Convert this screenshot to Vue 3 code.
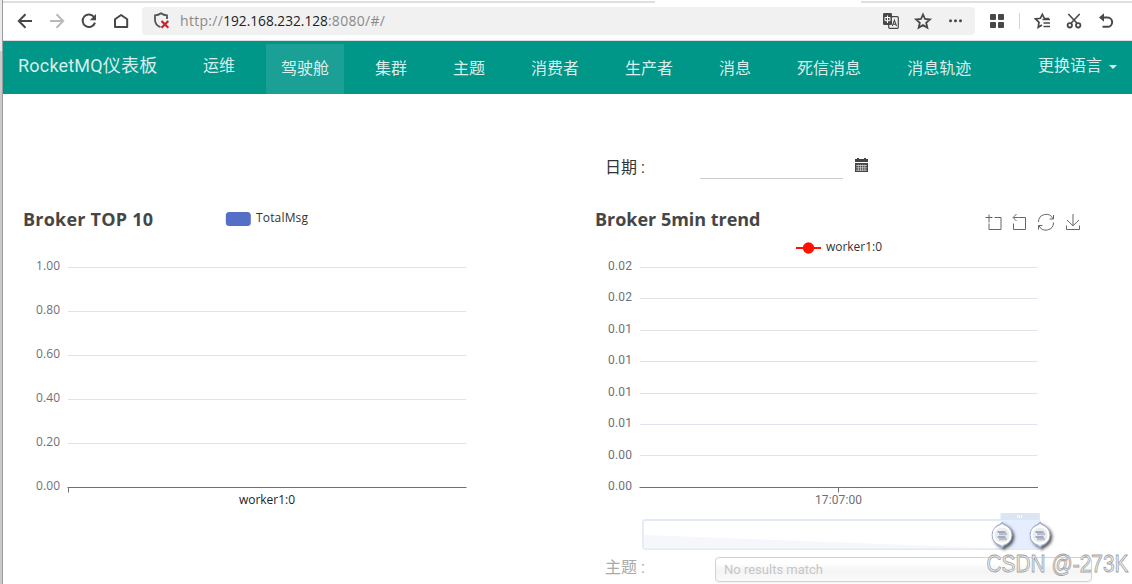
<template>
  <div class="window">
    <div class="window__edge"></div>
    <div class="browser">
      <div class="tabs">
        <span class="tabs__line tabs__line--left"></span>
        <span class="tabs__line tabs__line--right"></span>
      </div>

      <header class="toolbar">
        <svg class="toolbar__nav" width="139" height="34" viewBox="3 4 139 34" fill="none" stroke="#484848" stroke-width="2">
          <path d="M32 21H19.5M25.5 14.2L18.8 21l6.7 6.8" />
          <path stroke="#b9b9b9" d="M50 21h12.5M56.5 14.2l6.7 6.8-6.7 6.8" />
          <path d="M94.2 17.2A6.3 6.3 0 1 0 95 22.6" />
          <path fill="#484848" stroke="none" d="M96 14v6.2h-6.2z" />
          <path d="M115 19.2v7.9h12.2v-7.9L121.1 15z" stroke-linejoin="round" />
        </svg>

        <div class="address">
          <svg class="address__shield" width="18" height="18" viewBox="0 0 18 18" fill="none">
            <path d="M7.5 15.3C3.8 13.5 2 11.5 2 8V3.3c2.3 0 4.2-.6 6-2 1.8 1.4 3.7 2 6 2V7" stroke="#555" stroke-width="1.8" />
            <path d="M8.5 9l6.8 6.8M15.3 9l-6.8 6.8" stroke="#cf2027" stroke-width="2.2" />
          </svg>
          <p class="address__url"><span>http://</span><b>192.168.232.128</b><span>:8080/#/</span></p>
          <svg class="address__icons" width="84" height="20" viewBox="881 11 84 20" fill="none" stroke="#484848">
            <rect x="888.7" y="16.7" width="9.6" height="11.6" rx="1" fill="#f1f1f1" stroke-width="1.2" />
            <rect x="883" y="13" width="9" height="12" rx="1.3" fill="#484848" stroke="none" />
            <path d="M885 17.5h5v3.2h-5zM887.5 15.5v7.5" stroke="#fff" stroke-width="1" />
            <path d="M892.3 26l2.1-5.6 2.1 5.6M893 24.2h2.8" stroke-width="1.1" />
            <path d="M923 14.5l2 4.500 4.900.5-3.700 3.300 1.100 4.800-4.300-2.500-4.300 2.500 1.100-4.800-3.700-3.300 4.900-.5z" stroke-width="1.8" />
            <g fill="#484848" stroke="none">
              <circle cx="950.5" cy="20.8" r="1.5" />
              <circle cx="955.5" cy="20.8" r="1.5" />
              <circle cx="960.5" cy="20.8" r="1.5" />
            </g>
          </svg>
        </div>

        <svg class="toolbar__tools" width="142" height="26" viewBox="982 8 142 26" fill="none" stroke="#484848" stroke-width="1.8">
          <g fill="#484848" stroke="none">
            <rect x="990" y="14" width="6" height="6" rx="1" />
            <rect x="998" y="14" width="6" height="6" rx="1" />
            <rect x="990" y="22" width="6" height="6" rx="1" />
            <rect x="998" y="22" width="6" height="6" rx="1" />
          </g>
          <path stroke="#d4d4d4" stroke-width="1" d="M1019.5 13v16" />
          <path d="M1049 18.6l-4.700-.3-2-4-2 4-4.800.6 3.500 3.400-.8 5 3.800-2.300" stroke-width="1.7" />
          <path d="M1042.5 19.5h7.5M1043.5 23h6.5M1043.5 26.5h6.5" stroke-width="1.7" />
          <path d="M1068.3 14l9.2 9.7M1079.7 14l-9.2 9.7" stroke-width="1.6" />
          <circle cx="1069.8" cy="25.3" r="2.2" />
          <circle cx="1078.2" cy="25.3" r="2.2" />
          <path d="M1101.5 17.5h6a4.6 4.6 0 0 1 0 9.3h-5" stroke-width="2" />
          <path fill="#484848" stroke="none" d="M1099 17.5l5-4.3v8.6z" />
        </svg>
      </header>

      <nav class="navbar">
        <a class="navbar__brand">RocketMQ仪表板</a>
        <a class="navbar__item navbar__item--ops">运维</a>
        <a
          v-for="item in menu"
          :key="item"
          class="navbar__item"
          :class="{ 'navbar__item--active': item === active }"
          @click="active = item"
        >{{ item }}</a>
        <a class="navbar__lang">更换语言<i class="caret"></i></a>
      </nav>

      <main class="dashboard">
        <section class="panel panel--top">
          <svg class="chart" width="480" height="320">
            <text class="chart__title" x="5" y="26" textLength="130">Broker TOP 10</text>
            <rect x="207.8" y="12" width="25" height="14" rx="3.5" fill="#5470c6" />
            <text class="chart__legend" x="238" y="22" textLength="52">TotalMsg</text>
            <g v-for="(label, i) in topLabels" :key="i">
              <text class="chart__label" x="42" :y="70 + i * 44" textLength="24">{{ label }}</text>
              <path v-if="i < topLabels.length - 1" class="chart__grid" :d="`M50 ${67.5 + i * 44}H448`" />
            </g>
            <path class="chart__axis" d="M49.5 287.5H448.5M50.5 287.5v5" />
            <text class="chart__category" x="249" y="304" textLength="56">worker1:0</text>
          </svg>
        </section>

        <section class="panel">
          <div class="field">
            <label class="field__label">日期<span>:</span></label>
            <input v-model="date" class="field__date" type="text" />
            <svg width="14" height="14" viewBox="0 0 14 14">
              <path fill="#444" d="M0 1h2V0h2v1h5V0h2v1h2v3H0zM0 5h13v9H0z" />
              <path stroke="#ddd" stroke-width=".7" d="M1 7.5h11M1 9.8h11M1 12.2h11M3.300 6.500v6.500M5.500 6.500v6.500M7.700 6.500v6.500M9.900 6.500v6.500" />
            </svg>
          </div>

          <svg class="chart chart--trend" width="500" height="356">
            <defs>
              <filter id="knobShadow" x="-30%" y="-30%" width="170%" height="170%">
                <feDropShadow dx="2" dy="2" stdDeviation="1.5" flood-color="#333" flood-opacity=".8" />
              </filter>
              <linearGradient id="knobFill" x2="1" y2="1">
                <stop offset="0" stop-color="#fff" />
                <stop offset="1" stop-color="#dcdcde" />
              </linearGradient>
            </defs>
            <text class="chart__title" x="5" y="26" textLength="165.500">Broker 5min trend</text>
            <g class="chart__tools">
              <path d="M399 14.5v8M395.5 17.5h7M404.5 17.5h6.5v12h-12v-6" />
              <path d="M428.500 17.500h7v12h-12v-6M423.500 17.500h5M426.500 14l-3.500 3.500 3.500 3.500" />
              <path d="M448.5 22a7.600 7.600 0 0 1 14.500-3.200M463.500 22.500a7.600 7.600 0 0 1-14.500 3.200M463.500 15v4h-4M448.500 29.500v-4h4" />
              <path d="M483 14v11.500M477 20l6 5.800 6-5.800M476.500 25.500v4h13v-4" />
            </g>
            <path d="M206 48h25" stroke="#f10" stroke-width="2" />
            <circle cx="218.5" cy="48" r="5.7" fill="#f10" />
            <text class="chart__legend" x="236" y="51" textLength="56">worker1:0</text>
            <g v-for="(label, i) in trendLabels" :key="i">
              <text class="chart__label chart__label--trend" x="42" :y="70 + Math.round(i * 31.43)" textLength="24">{{ label }}</text>
              <path
                v-if="i < trendLabels.length - 1"
                class="chart__grid"
                :d="`M50 ${67.5 + Math.round(i * 31.4)}H447.5`"
              />
            </g>
            <path class="chart__axis" d="M49.5 287.5H448M248.5 287.5v5" />
            <text class="chart__category chart__category--time" x="248.5" y="304" textLength="47">17:07:00</text>

            <rect x="53" y="320" width="397" height="29" rx="2.5" fill="#fff" stroke="#e3e9f7" stroke-width="1.8" />
            <path d="M54 335l358 13.5H54z" fill="#f5f7fc" />
            <rect x="410.5" y="313" width="39.5" height="7" rx="1.5" fill="#dce5f4" />
            <path d="M427.5 315v3M429.5 315v3M431.5 315v3" stroke="#fff" />
            <rect x="411.5" y="320" width="38.5" height="29" fill="#e5edff" />
            <g v-for="x in [412, 450]" :key="x" :transform="`translate(${x} 335)`">
              <path d="M0 -12.5l2 2a11 11 0 0 1 0 21l-2 2-2-2a11 11 0 0 1 0-21z" fill="url(#knobFill)" stroke="#98a9cf" stroke-width="1.2" filter="url(#knobShadow)" />
              <circle r="8.5" fill="#ececed" stroke="#fff" stroke-width="2" />
              <path d="M-3 -1h8M-3 4h8" stroke="#bdbdc4" stroke-width="2.5" />
              <path d="M-4.500 -3h8M-4.500 2h8" stroke="#8496c2" stroke-width="1.7" />
            </g>
          </svg>

          <div class="field field--topic">
            <label class="field__label">主题<span>:</span></label>
            <div class="field__select">No results match</div>
          </div>
        </section>
      </main>
    </div>

    <svg class="watermark" width="150" height="34">
      <text x="4.5" y="24" textLength="142" lengthAdjust="spacingAndGlyphs">CSDN @-273K</text>
    </svg>
  </div>
</template>

<script setup>
import { ref } from 'vue';

const menu = ['驾驶舱', '集群', '主题', '消费者', '生产者', '消息', '死信消息', '消息轨迹'];
const active = ref('驾驶舱');
const date = ref('');

const topLabels = ['1.00', '0.80', '0.60', '0.40', '0.20', '0.00'];
const trendLabels = ['0.02', '0.02', '0.01', '0.01', '0.01', '0.01', '0.00', '0.00'];
</script>

<style>
body {
  margin: 0;
  overflow: hidden;
}
</style>

<style scoped>
.window {
  position: relative;
  display: flex;
  width: 1132px;
  height: 584px;
  overflow: hidden;
  background: #fff;
  font-family: Roboto, 'Noto Sans CJK SC', sans-serif;
}

.window__edge {
  box-sizing: border-box;
  width: 3px;
  flex: none;
  background: linear-gradient(#e9eaec 51px, #c9cacc 51px);
  border-right: 1px solid #9b9da1;
}

.browser {
  flex: 1;
  min-width: 0;
}

.tabs {
  display: flex;
  justify-content: space-between;
  height: 3px;
  padding-top: 1px;
  box-sizing: border-box;
}

.tabs__line {
  height: 2px;
  background: #dedfdf;
}

.tabs__line--left {
  width: 652px;
}

.tabs__line--right {
  width: 271px;
}

.toolbar {
  display: flex;
  align-items: center;
  height: 38px;
  box-sizing: border-box;
  padding-bottom: 1px;
  border-bottom: 1px solid #dcdedf;
}

.toolbar__nav {
  flex: none;
}

.toolbar__tools {
  margin-left: 7px;
}

.address {
  display: flex;
  align-items: center;
  box-sizing: border-box;
  width: 833px;
  height: 28px;
  padding: 0 10px 0 11px;
  border-radius: 4px;
  background: #f1f1f1;
}

.address__shield {
  margin-right: 9px;
}

.address__url {
  flex: 1;
  margin: 0 0 2px;
  font-family: 'Open Sans', sans-serif;
  font-size: 14px;
  letter-spacing: 0.3px;
  color: #8a8a8a;
}

.address__url b {
  font-size: 13.7px;
  font-weight: 400;
  letter-spacing: 0;
  color: #222;
}

.navbar {
  display: flex;
  align-items: flex-end;
  height: 53px;
  background: #009688;
  color: rgba(255, 255, 255, 0.86);
  font-size: 16px;
}

.navbar__brand {
  width: 170px;
  padding-left: 15px;
  line-height: 56px;
  font-size: 18px;
  letter-spacing: 0.2px;
  white-space: nowrap;
}

.navbar__item {
  height: 50px;
  margin-right: 16px;
  padding: 0 15px;
  line-height: 49px;
  cursor: pointer;
}

.navbar__item--ops {
  line-height: 43px;
}

.navbar__item--active {
  background: rgba(255, 255, 255, 0.1);
}

.navbar__lang {
  display: flex;
  align-items: flex-start;
  height: 50px;
  margin-left: auto;
  padding-right: 15px;
  line-height: 43px;
}

.caret {
  margin: 21px 0 0 7px;
  border: 4px solid transparent;
  border-top-color: currentColor;
  border-bottom: 0;
}

.dashboard {
  display: grid;
  grid-template-columns: 572px 1fr;
  height: 490px;
}

.panel {
  padding: 60px 0 0 15px;
}

.panel--top {
  padding-top: 106px;
}

.field {
  display: flex;
  height: 26px;
  align-items: center;
  padding-left: 15px;
}

.field__label {
  width: 95px;
  padding-top: 1px;
  font-size: 16px;
  line-height: 26px;
  color: #333;
}

.field__label span {
  margin-left: 4px;
}

.field__date {
  box-sizing: border-box;
  width: 143px;
  height: 24px;
  margin-right: 12px;
  padding: 0;
  border: 0;
  border-bottom: 1px solid #ccc;
  outline: 0;
  background: none;
}

.field > svg {
  margin-bottom: 4px;
}

.field--topic .field__label {
  width: 110px;
  padding: 0 0 3px;
  line-height: 22px;
  color: #aaa;
}

.field__select {
  box-sizing: border-box;
  width: 377px;
  height: 25px;
  padding-left: 8px;
  border: 1px solid #d3d3d3;
  border-radius: 4px;
  background: linear-gradient(#fff 20%, #f4f4f4 55%, #fafafa);
  box-shadow: 0 1px 1px rgba(0, 0, 0, 0.06);
  line-height: 23px;
  font-size: 13px;
  color: #c6c6c6;
}

.chart {
  display: block;
  font-family: 'Open Sans', sans-serif;
  font-size: 12px;
}

.chart--trend {
  margin-top: 20px;
  font-family: Roboto, sans-serif;
}

.chart__title {
  font-family: 'Open Sans', sans-serif;
  font-size: 18px;
  font-weight: 700;
  fill: #464646;
}

.chart__legend {
  font-family: 'Open Sans', sans-serif;
  fill: #333;
}

.chart__label {
  text-anchor: end;
  fill: #6e7079;
}

.chart__category {
  text-anchor: middle;
  fill: #222;
}

.chart__category--time {
  fill: #6e7079;
}

.chart__grid {
  stroke: #e0e3ec;
}

.chart__axis {
  fill: none;
  stroke: #6e7079;
}

.chart__tools {
  fill: none;
  stroke: #666;
}

.watermark {
  position: absolute;
  left: 982px;
  top: 548px;
  overflow: visible;
  font-family: 'Liberation Sans', sans-serif;
  font-size: 23px;
  fill: #f2f2f2;
  stroke: #9f9f9f;
  stroke-width: 0.8px;
}
</style>
